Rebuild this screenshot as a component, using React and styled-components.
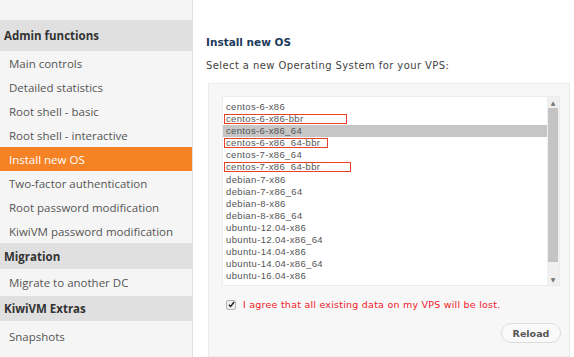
import React from 'react';
import styled, { createGlobalStyle } from 'styled-components';

const Global = createGlobalStyle`
  html, body { margin: 0; padding: 0; background: #fff; }
  body { width: 574px; height: 357px; overflow: hidden; }
`;

const Page = styled.div`
  display: flex;
  width: 574px;
  height: 357px;
`;

const Sidebar = styled.div`
  width: 192px;
  flex-shrink: 0;
  background: #f5f5f5;
  border-right: 1px solid #e0e0e0;
  padding-top: 20px;
  font-family: "Open Sans", "Noto Sans", sans-serif;
`;

const Header = styled.div`
  height: ${p => p.$h}px;
  display: flex;
  align-items: center;
  padding-left: 4px;
  background: #e0e0e0;
  color: #333;
  font-weight: 700;
  font-size: 11.5px;
`;

const Item = styled.div`
  height: ${p => p.$h || 24}px;
  display: flex;
  align-items: center;
  padding-left: 9px;
  font-size: 11.5px;
  color: ${p => (p.$active ? '#fff' : '#555')};
  background: ${p => (p.$active ? '#f68226' : 'transparent')};
`;

const Main = styled.div`
  flex: 1;
  background: #fff;
  padding: 36px 4px 0 13px;
  font-family: "DejaVu Sans", Verdana, sans-serif;
`;

const Title = styled.h2`
  margin: 0;
  font-size: 10.5px;
  font-weight: 700;
  color: #1d3b5c;
  height: 20px;
`;

const Lead = styled.p`
  margin: 4px 0 0;
  font-size: 10px;
  color: #444;
  letter-spacing: 0.4px;
  height: 14px;
`;

const Box = styled.div`
  margin: 9px 0 0 2px;
  height: 274px;
  box-sizing: border-box;
  background: #f7f7f7;
  border: 1px solid #ebebeb;
  padding: 12px 9px 0 13px;
  display: flex;
  flex-direction: column;
`;

const List = styled.div`
  display: flex;
  height: 188px;
  background: #fff;
  border: 1px solid #ececec;
`;

const Options = styled.div`
  flex: 1;
  padding: 4px 0 0 0;
  overflow: hidden;
`;

const Option = styled.div`
  position: relative;
  height: 12.1px;
  line-height: 12px;
  padding-left: 3px;
  font-family: "Liberation Sans", Arial, sans-serif;
  font-size: 9.5px;
  letter-spacing: 0.35px;
  color: #555;
  background: ${p => (p.$selected ? '#c6c6c6' : 'transparent')};
`;

const Mark = styled.span`
  position: absolute;
  left: 1px;
  top: 1px;
  height: 8px;
  width: ${p => p.$w}px;
  border: 1px solid #e8402a;
`;

const Scroll = styled.div`
  width: 12px;
  background: #f0f0f0;
  display: flex;
  flex-direction: column;
  align-items: center;
`;

const Arrow = styled.div`
  height: 11px;
  display: flex;
  align-items: center;
  justify-content: center;
  color: #777;
  font-size: 6px;
`;

const Thumb = styled.div`
  width: 10px;
  flex: 1;
  margin-bottom: 12px;
  background: #c4c4c4;
`;

const Agree = styled.label`
  display: flex;
  align-items: center;
  gap: 7px;
  margin: 13px 0 0 4px;
  font-size: 9.5px;
  letter-spacing: 0.23px;
  color: #f0202a;
`;

const Check = styled.span`
  width: 8px;
  height: 8px;
  border: 1px solid #b5b5b5;
  border-radius: 2px;
  background: #eee;
  display: flex;
  align-items: center;
  justify-content: center;
`;

const Actions = styled.div`
  display: flex;
  justify-content: flex-end;
  margin-top: 13px;
  margin-right: -1px;
`;

const Button = styled.button`
  width: 60px;
  height: 20px;
  border: 1px solid #ddd;
  border-radius: 10px;
  background: #f9f9f9;
  font-family: "DejaVu Sans", Verdana, sans-serif;
  font-size: 9.5px;
  font-weight: 700;
  color: #555;
  padding: 0;
`;

const admin = [
  'Main controls',
  'Detailed statistics',
  'Root shell - basic',
  'Root shell - interactive',
  'Install new OS',
  'Two-factor authentication',
  'Root password modification',
  'KiwiVM password modification',
];

const osList = [
  { name: 'centos-6-x86' },
  { name: 'centos-6-x86-bbr', mark: 121 },
  { name: 'centos-6-x86_64', selected: true },
  { name: 'centos-6-x86_64-bbr', mark: 102 },
  { name: 'centos-7-x86_64' },
  { name: 'centos-7-x86_64-bbr', mark: 125 },
  { name: 'debian-7-x86' },
  { name: 'debian-7-x86_64' },
  { name: 'debian-8-x86' },
  { name: 'debian-8-x86_64' },
  { name: 'ubuntu-12.04-x86' },
  { name: 'ubuntu-12.04-x86_64' },
  { name: 'ubuntu-14.04-x86' },
  { name: 'ubuntu-14.04-x86_64' },
  { name: 'ubuntu-16.04-x86' },
];

export default function App() {
  return (
    <Page>
      <Global />
      <Sidebar>
        <Header $h={31}>Admin functions</Header>
        {admin.map(a => (
          <Item key={a} $active={a === 'Install new OS'}>{a}</Item>
        ))}
        <Header $h={26}>Migration</Header>
        <Item $h={27}>Migrate to another DC</Item>
        <Header $h={25}>KiwiVM Extras</Header>
        <Item $h={30}>Snapshots</Item>
      </Sidebar>
      <Main>
        <Title>Install new OS</Title>
        <Lead>Select a new Operating System for your VPS:</Lead>
        <Box>
          <List>
            <Options>
              {osList.map(o => (
                <Option key={o.name} $selected={o.selected}>
                  {o.mark && <Mark $w={o.mark} />}
                  {o.name}
                </Option>
              ))}
            </Options>
            <Scroll>
              <Arrow>▲</Arrow>
              <Thumb />
              <Arrow>▼</Arrow>
            </Scroll>
          </List>
          <Agree>
            <Check>
              <svg width="7" height="7" viewBox="0 0 8 8">
                <path d="M1 4.2 L3 6.3 L7 1.2" fill="none" stroke="#222" strokeWidth="1.6" />
              </svg>
            </Check>
            I agree that all existing data on my VPS will be lost.
          </Agree>
          <Actions>
            <Button>Reload</Button>
          </Actions>
        </Box>
      </Main>
    </Page>
  );
}
